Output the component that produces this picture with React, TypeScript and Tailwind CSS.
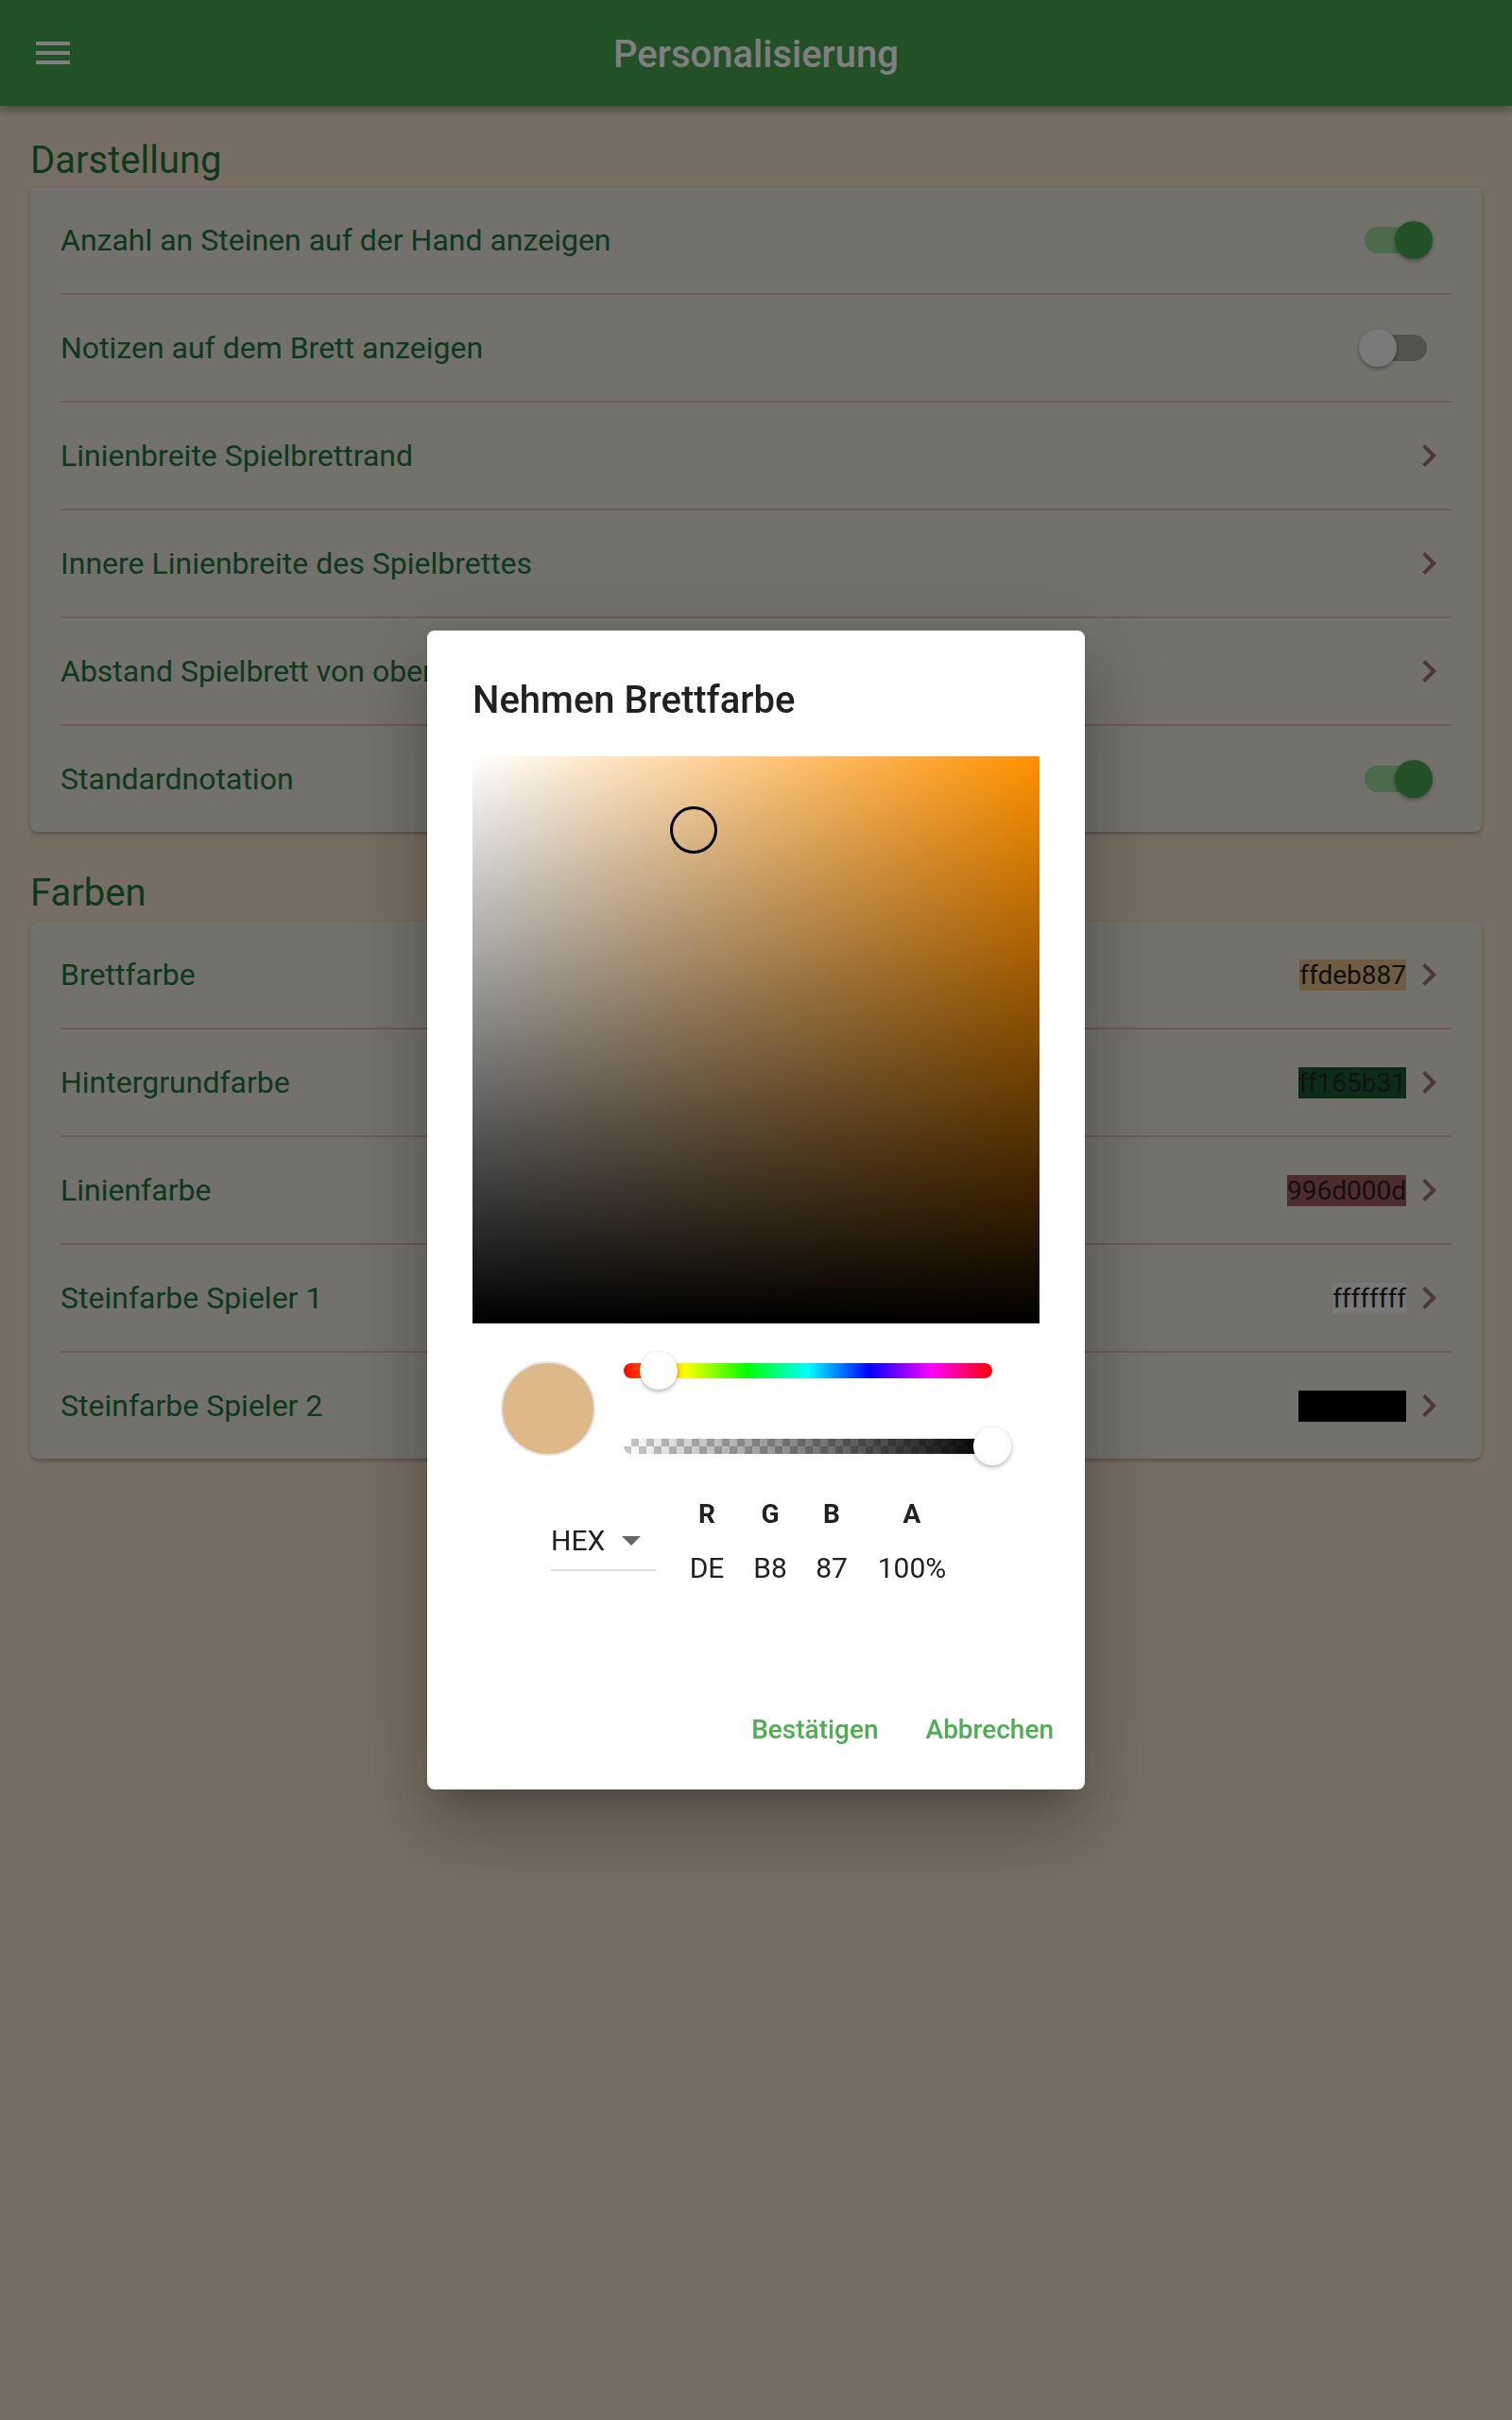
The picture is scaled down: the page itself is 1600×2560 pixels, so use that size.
import React from "react";

function Chevron() {
  return (
    <svg width="48" height="48" viewBox="0 0 24 24" className="shrink-0">
      <path d="M10 6L8.59 7.41 13.17 12l-4.58 4.59L10 18l6-6z" fill="#93707a" />
    </svg>
  );
}

function Switch({ on }: { on: boolean }) {
  return (
    <div className="relative w-[80px] h-[40px] mr-[20px] shrink-0">
      <div
        className={
          "absolute left-[8px] top-[6px] w-[66px] h-[28px] rounded-full " +
          (on ? "bg-[#98d498]" : "bg-[#a8a498]")
        }
      />
      <div
        className={
          "absolute top-0 w-[40px] h-[40px] rounded-full shadow-[0_2px_4px_rgba(0,0,0,0.35)] " +
          (on ? "left-[40px] bg-[#46a24e]" : "left-[2px] bg-[#f4f4f4]")
        }
      />
    </div>
  );
}

function Row({
  label,
  last,
  children,
}: {
  label: string;
  last?: boolean;
  children: React.ReactNode;
}) {
  return (
    <div
      className={
        "flex items-center justify-between " +
        (last ? "h-[112px]" : "h-[114px] border-b-2 border-[#d8b4b4]")
      }
    >
      <span className="text-[32px] text-[#1a723c] whitespace-nowrap">{label}</span>
      <div className="flex items-center">{children}</div>
    </div>
  );
}

function Hex({ text, bg, fg }: { text: string; bg: string; fg?: string }) {
  return (
    <span
      className={"text-[28px] leading-[33px] px-0 " + (fg ?? "text-[#222222]")}
      style={{ backgroundColor: bg }}
    >
      {text}
    </span>
  );
}

export default function App() {
  return (
    <div className="relative min-h-[2560px] w-full bg-[#ecdcc4] font-['Roboto',sans-serif]">
      <header className="h-[112px] bg-[#46a24e] flex items-center px-8 shadow-[0_4px_10px_rgba(0,0,0,0.35)] relative z-10">
        <svg width="48" height="48" viewBox="0 0 24 24" className="shrink-0">
          <path d="M3 18h18v-2H3v2zm0-5h18v-2H3v2zm0-7v2h18V6H3z" fill="#ffffff" />
        </svg>
        <div className="flex-1 text-center text-white text-[40px] font-medium pt-[3px]">
          Personalisierung
        </div>
        <div className="w-12" />
      </header>

      <main className="px-8">
        <h2 className="mt-[34px] mb-[4px] text-[40px] leading-[48px] text-[#1d7438]">Darstellung</h2>
        <div className="rounded-lg bg-[#e4e2d6] px-8 shadow-[0_2px_4px_rgba(0,0,0,0.3)]">
          <Row label="Anzahl an Steinen auf der Hand anzeigen">
            <Switch on />
          </Row>
          <Row label="Notizen auf dem Brett anzeigen">
            <Switch on={false} />
          </Row>
          <Row label="Linienbreite Spielbrettrand">
            <Chevron />
          </Row>
          <Row label="Innere Linienbreite des Spielbrettes">
            <Chevron />
          </Row>
          <Row label="Abstand Spielbrett von oben">
            <Chevron />
          </Row>
          <Row label="Standardnotation" last>
            <Switch on />
          </Row>
        </div>

        <h2 className="mt-[41px] mb-[6px] text-[40px] leading-[48px] text-[#1d7438]">Farben</h2>
        <div className="rounded-lg bg-[#e4e2d6] px-8 shadow-[0_2px_4px_rgba(0,0,0,0.3)]">
          <Row label="Brettfarbe">
            <Hex text="ffdeb887" bg="#deb887" />
            <Chevron />
          </Row>
          <Row label="Hintergrundfarbe">
            <Hex text="ff165b31" bg="#165b31" />
            <Chevron />
          </Row>
          <Row label="Linienfarbe">
            <Hex text="996d000d" bg="#9d5a5d" />
            <Chevron />
          </Row>
          <Row label="Steinfarbe Spieler 1">
            <Hex text="ffffffff" bg="#f0f0f0" />
            <Chevron />
          </Row>
          <Row label="Steinfarbe Spieler 2" last>
            <Hex text="ff000000" bg="#000000" fg="text-black" />
            <Chevron />
          </Row>
        </div>
      </main>

      <div className="fixed inset-0 z-20 bg-black/50 flex items-center justify-center">
        <div className="w-[696px] h-[1226px] bg-white rounded-[8px] flex flex-col shadow-[0_48px_76px_6px_rgba(0,0,0,0.14),0_18px_92px_16px_rgba(0,0,0,0.12),0_22px_30px_-14px_rgba(0,0,0,0.2)]">
          <div className="pt-[50px] px-12">
            <div className="text-[40px] leading-[47px] font-medium text-[#212121]">Nehmen Brettfarbe</div>

            <div className="relative mt-[36px] w-[600px] h-[600px] bg-[linear-gradient(to_right,#ffffff,#ff9100)]">
              <div className="absolute inset-0 bg-[linear-gradient(to_bottom,rgba(0,0,0,0),#000000)]" />
              <div className="absolute left-[209px] top-[53px] w-[50px] h-[50px] rounded-full border-[3px] border-black" />
            </div>

            <div className="mt-[30px] flex items-center pl-[30px]">
              <div className="w-[100px] h-[100px] rounded-full bg-[#deb887] border-2 border-[#e2e2e2] shrink-0" />
              <div className="ml-[30px] w-[390px] flex flex-col gap-[40px]">
                <div className="relative h-[40px]">
                  <div className="absolute left-0 right-0 top-[12px] h-[16px] rounded-full bg-[linear-gradient(to_right,#ff0000,#ffff00,#00ff00,#00ffff,#0000ff,#ff00ff,#ff0000)]" />
                  <div className="absolute left-[17px] top-0 w-[40px] h-[40px] rounded-full bg-white shadow-[0_2px_5px_rgba(0,0,0,0.3)]" />
                </div>
                <div className="relative h-[40px]">
                  <div className="absolute left-0 right-0 top-[12px] h-[16px] rounded-full overflow-hidden bg-[image:repeating-conic-gradient(#c8c8c8_0%_25%,#ffffff_0%_50%)] bg-[length:16px_16px]">
                    <div className="absolute inset-0 bg-[linear-gradient(to_right,rgba(0,0,0,0),#000000)]" />
                  </div>
                  <div className="absolute left-[370px] top-0 w-[40px] h-[40px] rounded-full bg-white shadow-[0_2px_5px_rgba(0,0,0,0.3)]" />
                </div>
              </div>
            </div>

            <div className="mt-[35px] flex items-start pl-[83px]">
              <div className="mt-[27px] w-[111px] border-b-2 border-[#dddddd] pb-[13px] flex items-center">
                <span className="text-[30px] leading-[35px] text-[#212121]">HEX</span>
                <svg width="20" height="10" viewBox="0 0 20 10" className="ml-[18px]">
                  <path d="M0 0h20L10 10z" fill="#666666" />
                </svg>
              </div>
              {[
                ["R", "DE", "ml-[24px] w-[60px]"],
                ["G", "B8", "ml-[7px] w-[60px]"],
                ["B", "87", "ml-[5px] w-[60px]"],
                ["A", "100%", "ml-[15px] w-[80px]"],
              ].map(([h, v, cls]) => (
                <div key={h} className={"flex flex-col items-center " + cls}>
                  <span className="text-[28px] leading-[33px] font-bold text-[#212121]">{h}</span>
                  <span className="mt-[23px] text-[30px] leading-[35px] text-[#212121]">{v}</span>
                </div>
              ))}
            </div>
          </div>

          <div className="mt-auto pb-[27px] pr-[17px] flex justify-end gap-[18px]">
            <div className="h-[72px] px-4 flex items-center text-[28px] font-medium text-[#4caf50]">Bestätigen</div>
            <div className="h-[72px] px-4 flex items-center text-[28px] font-medium text-[#4caf50]">Abbrechen</div>
          </div>
        </div>
      </div>
    </div>
  );
}
